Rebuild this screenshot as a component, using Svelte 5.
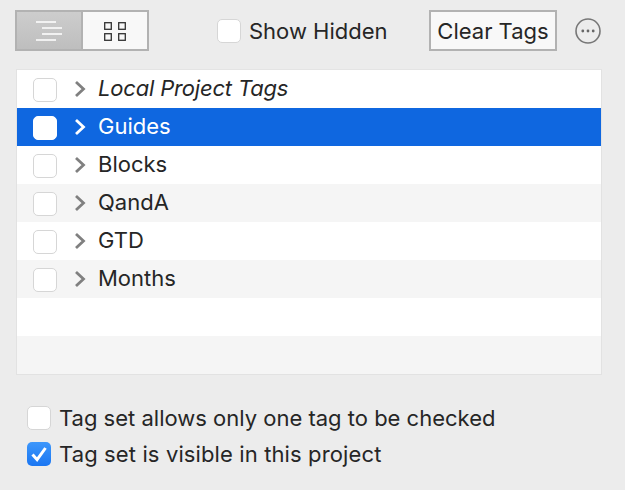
<script>
  const rows = [
    { name: 'Local Project Tags', italic: true },
    { name: 'Guides', selected: true },
    { name: 'Blocks' },
    { name: 'QandA' },
    { name: 'GTD' },
    { name: 'Months' },
    { name: '', empty: true },
    { name: '', empty: true }
  ];
</script>

<div class="pane">
  <div class="toolbar">
    <div class="segments">
      <button class="seg active" type="button" aria-label="List view">
        <svg width="26" height="20" viewBox="0 0 26 20" fill="none" stroke="#fff" stroke-width="1.7">
          <path d="M0 1h20M6 7h20M6 13h20M0 19h20" />
        </svg>
      </button>
      <button class="seg" type="button" aria-label="Grid view">
        <svg width="24" height="20" viewBox="0 0 24 20" fill="none" stroke="#333" stroke-width="1.3">
          <rect x="1.7" y="1.7" width="6.6" height="6.6" />
          <rect x="15.7" y="1.7" width="6.6" height="6.6" />
          <rect x="1.7" y="12.7" width="6.6" height="6.6" />
          <rect x="15.7" y="12.7" width="6.6" height="6.6" />
        </svg>
      </button>
    </div>

    <label class="hidden-toggle">
      <span class="check"></span>
      <span>Show Hidden</span>
    </label>

    <button class="clear" type="button">Clear Tags</button>

    <button class="more" type="button" aria-label="More">
      <svg width="26" height="26" viewBox="0 0 26 26" fill="none">
        <circle cx="13" cy="13" r="12" stroke="#777" stroke-width="1.6" />
        <circle cx="7.8" cy="13" r="1.4" fill="#666" />
        <circle cx="13" cy="13" r="1.4" fill="#666" />
        <circle cx="18.2" cy="13" r="1.4" fill="#666" />
      </svg>
    </button>
  </div>

  <div class="list">
    {#each rows as row}
      <div class="row" class:selected={row.selected}>
        {#if !row.empty}
          <span class="check"></span>
          <svg class="chevron" width="12" height="18" viewBox="0 0 12 18" fill="none">
            <path d="M2 2l7.5 7L2 16" stroke="currentColor" stroke-width="2.8" />
          </svg>
          <span class="name" class:italic={row.italic}>{row.name}</span>
        {/if}
      </div>
    {/each}
  </div>

  <div class="options">
    <label class="option">
      <span class="check"></span>
      <span>Tag set allows only one tag to be checked</span>
    </label>
    <label class="option">
      <span class="check on">
        <svg width="24" height="24" viewBox="0 0 24 24" fill="none">
          <path d="M5.5 12.5l4.6 5.2L18.5 6" stroke="#fff" stroke-width="3" />
        </svg>
      </span>
      <span class="wide">Tag set is visible in this project</span>
    </label>
  </div>
</div>

<style>
  :global(body) {
    background: #ececec;
  }
  .pane {
    width: 625px;
    height: 490px;
    box-sizing: border-box;
    padding-top: 10px;
    overflow: hidden;
    background: #ececec;
    color: #262626;
    font: 400 22px/26px Inter, "Liberation Sans", sans-serif;
  }
  button {
    font: inherit;
    color: inherit;
    padding: 0;
  }
  .toolbar {
    display: flex;
    align-items: center;
    height: 41px;
    padding-left: 15px;
  }
  .segments {
    display: flex;
    box-sizing: border-box;
    width: 134px;
    height: 41px;
    border: 2px solid #b2b2b2;
  }
  .seg {
    display: flex;
    align-items: center;
    justify-content: center;
    flex: 1;
    border: 0;
    background: #f8f8f8;
  }
  .seg.active {
    flex: none;
    width: 66px;
    border-right: 2px solid #b2b2b2;
    background: linear-gradient(#cdcdcd, #bebebe);
  }
  .hidden-toggle {
    display: flex;
    align-items: center;
    gap: 8px;
    margin-left: 68px;
    width: 212px;
  }
  .clear {
    box-sizing: border-box;
    width: 128px;
    height: 41px;
    border: 2px solid #b2b2b2;
    background: #f8f8f8;
  }
  .more {
    display: flex;
    margin-left: 18px;
    border: 0;
    background: none;
  }
  .check {
    display: block;
    flex: none;
    box-sizing: border-box;
    width: 24px;
    height: 24px;
    border: 1px solid #d6d6d6;
    border-radius: 5px;
    background: #fff;
  }
  .check.on {
    border: 0;
    background: linear-gradient(#3d97fb, #1a76f2);
  }
  .check.on svg {
    display: block;
  }
  .list {
    box-sizing: border-box;
    width: 586px;
    height: 306px;
    margin: 18px 0 0 16px;
    border: 1px solid #e2e2e2;
    border-top-color: #e4e4e4;
    background: #fff;
  }
  .row {
    display: flex;
    align-items: center;
    height: 38px;
    padding-left: 16px;
  }
  .row .check {
    margin-top: 2px;
  }
  .row:nth-child(even) {
    background: #f5f5f5;
  }
  .row:nth-child(2).selected {
    background: #0f67e0;
    color: #fff;
  }
  .chevron {
    margin-left: 17px;
    color: #808080;
  }
  .selected .chevron {
    color: #fff;
  }
  .selected .check {
    border-color: #fff;
  }
  .name {
    margin: 0 0 2px 12px;
  }
  .italic {
    font-style: italic;
    letter-spacing: -0.18px;
  }
  .wide {
    letter-spacing: 0.12px;
  }
  .options {
    display: flex;
    flex-direction: column;
    gap: 10px;
    margin: 30px 0 0 27px;
  }
  .option {
    display: flex;
    align-items: center;
    gap: 8px;
  }
</style>
